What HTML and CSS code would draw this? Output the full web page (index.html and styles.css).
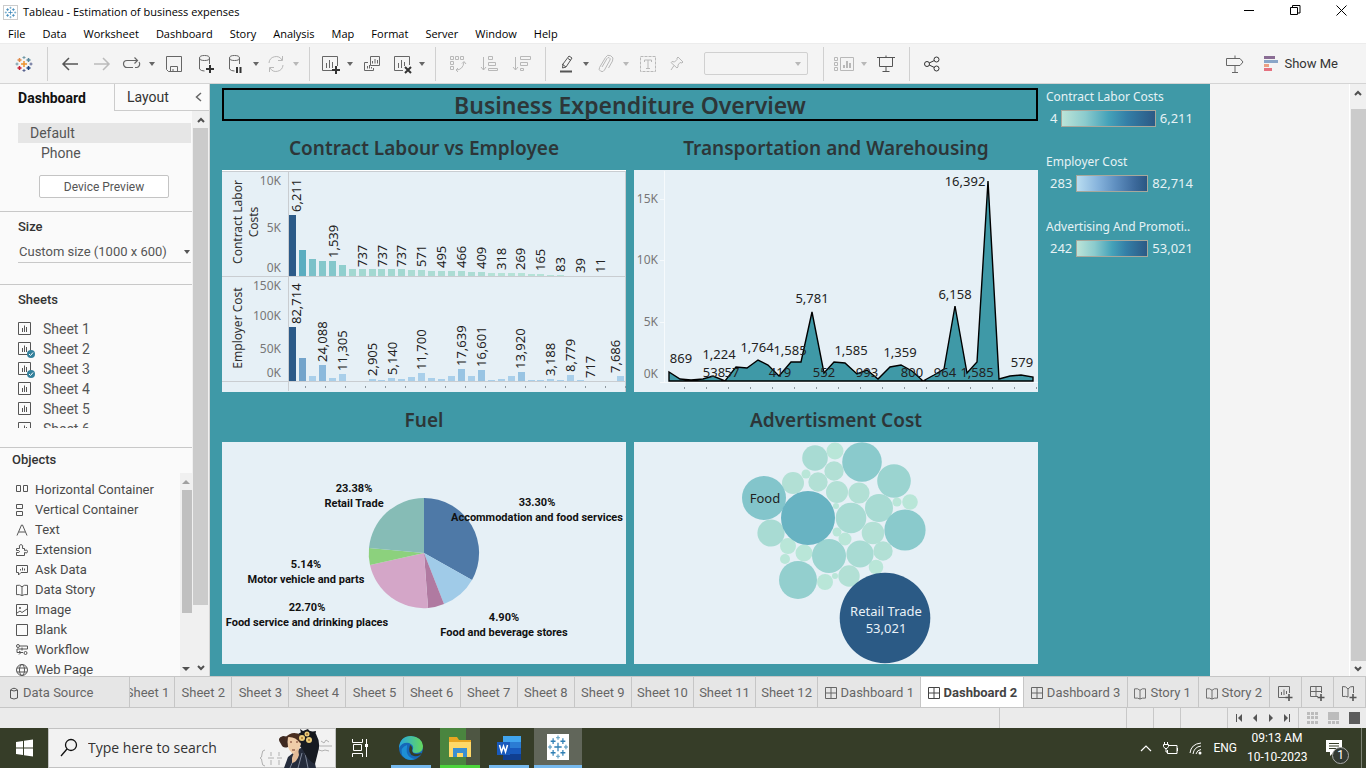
FILE: index.html
```html
<!DOCTYPE html>
<html lang="en">
<head>
<meta charset="utf-8">
<title>Tableau - Estimation of business expenses</title>
<meta name="viewport" content="width=device-width, initial-scale=1">
<link rel="stylesheet" href="styles.css">
</head>
<body>
<svg class="sprite" aria-hidden="true">
  <symbol id="caret" viewBox="0 0 8 6"><path d="M1 1h6L4 5z" fill="currentColor"/></symbol>
  <symbol id="chart" viewBox="0 0 14 14"><path d="M.5.5h12v12H.5zM4.500 6v4M6.500 3.500V10M8.500 5v5" fill="none" stroke="currentColor"/></symbol>
  <symbol id="grid" viewBox="0 0 12 12"><path d="M.5.5h11v11H.5zM.5 6h11M6 .5v11" fill="none" stroke="currentColor"/></symbol>
  <symbol id="book" viewBox="0 0 13 13"><path d="M6.500 3v9.500M.5 1.500Q4 .5 6.500 3 9 .5 12.500 1.500V11.500Q9 11 6.500 12.500 4 11 .5 11.500z" fill="none" stroke="currentColor"/></symbol>
  <symbol id="badge" viewBox="0 0 8 8"><circle cx="4" cy="4" r="4" fill="#33809b"/><path d="M2 4l1.500 1.500L6 2.500" fill="none" stroke="#fff"/></symbol>
  <symbol id="up" viewBox="0 0 8 6"><path d="M1 5l3-3 3 3" fill="none" stroke="#505050" stroke-width="2"/></symbol>
  <symbol id="down" viewBox="0 0 8 6"><path d="M1 1l3 3 3-3" fill="none" stroke="#505050" stroke-width="2"/></symbol>
  <symbol id="database" viewBox="0 0 20 20"><g fill="none" stroke="currentColor"><ellipse cx="8.500" cy="4" rx="5" ry="2.500"/><path d="M3.500 4v11q1.500 2 5 2M13.500 4v6"/></g></symbol>
  <symbol id="tableau" viewBox="0 0 18 18"><g fill="none" stroke-width="1.500"><path d="M9 6v6M6 9h6" stroke="#eb912c"/><path d="M4.500 3v4M2.500 5h4" stroke="#e08a4a"/><path d="M13.500 3v4M11.500 5h4" stroke="#59879b"/><path d="M4.500 11v4M2.500 13h4" stroke="#c72035"/><path d="M13.500 11v4M11.500 13h4" stroke="#1f447e"/><path d="M9 1v3M7.500 2.500h3" stroke="#7199a6" stroke-width="1"/><path d="M9 14v3M7.500 15.500h3" stroke="#5b6591" stroke-width="1"/><path d="M2 7.500v3M.5 9h3" stroke="#7199a6" stroke-width="1"/><path d="M16 7.500v3M14.500 9h3" stroke="#5b6591" stroke-width="1"/></g></symbol>
  <symbol id="tableau-blue" viewBox="0 0 18 18"><rect width="18" height="18" fill="#fff"/><g stroke="#2f7fb4"><path d="M9 6v6M6 9h6M5 3v4M3 5h4M13 3v4M11 5h4M5 11v4M3 13h4M13 11v4M11 13h4"/><path d="M9 1v3M7.500 2.500h3M9 14v3M7.500 15.500h3M2.500 7.500v3M1 9h3M15.500 7.500v3M14 9h3" stroke="#6ba6c8"/></g></symbol>
</svg>

<header class="titlebar">
  <svg class="app-icon" width="15" height="15"><use href="#tableau-blue"/></svg>
  <span>Tableau - Estimation of business expenses</span>
  <div class="window-buttons">
    <button aria-label="Minimize"><svg width="11" height="11" viewBox="0 0 11 11"><path d="M0 5.500h10" stroke="#000"/></svg></button>
    <button aria-label="Restore"><svg width="11" height="11" viewBox="0 0 11 11"><path d="M.5 2.500h7v7h-7zM2.500 2.500v-2h7.500v7.500H8" fill="none" stroke="#000"/></svg></button>
    <button aria-label="Close"><svg width="11" height="11" viewBox="0 0 11 11"><path d="M.5.5l10 10M10.500.5l-10 10" stroke="#000"/></svg></button>
  </div>
</header>

<nav class="menubar" aria-label="Menu">
  <button>File</button><button>Data</button><button>Worksheet</button><button>Dashboard</button><button>Story</button><button>Analysis</button><button>Map</button><button>Format</button><button>Server</button><button>Window</button><button>Help</button>
</nav>

<div class="toolbar" role="toolbar" aria-label="Toolbar">
  <button class="tool home" aria-label="Start page"><svg width="18" height="18"><use href="#tableau"/></svg></button>
  <div class="group">
    <button class="tool" aria-label="Undo"><svg width="20" height="20" viewBox="0 0 20 20"><path d="M18 10H3M9 4l-6 6 6 6" fill="none" stroke="#555" stroke-width="1.500"/></svg></button>
    <button class="tool" aria-label="Redo"><svg width="20" height="20" viewBox="0 0 20 20"><path d="M2 10h15M11 4l6 6-6 6" fill="none" stroke="#bbb" stroke-width="1.500"/></svg></button>
    <button class="tool narrow" aria-label="Replay"><svg width="20" height="20" viewBox="0 0 20 20"><path d="M11 13.500H5a3.500 3.500 0 0 1 0-7H15M12.500 3.500L15.500 6.500l-3 3M17 8a3.500 3.500 0 0 1-2 5.500h-2" fill="none" stroke="#666" stroke-width="1.200"/></svg></button>
    <button class="more" aria-label="Replay options"><svg width="8" height="6"><use href="#caret"/></svg></button>
    <button class="tool" aria-label="Save"><svg width="20" height="20" viewBox="0 0 20 20"><path d="M2.500 2.500h15v15h-13l-2-2zM6.500 17.500v-5h7v5M9 17.500V15" fill="none" stroke="#666"/></svg></button>
    <button class="tool" aria-label="New data source"><svg width="20" height="20" viewBox="0 0 20 20"><use href="#database"/><path d="M14 11v8M10 15h8" stroke="#333" stroke-width="2"/></svg></button>
    <button class="tool narrow" aria-label="Pause updates"><svg width="20" height="20" viewBox="0 0 20 20"><use href="#database"/><path d="M11 13v6M14.500 13v6" stroke="#333" stroke-width="2"/></svg></button>
    <button class="more" aria-label="Update options"><svg width="8" height="6"><use href="#caret"/></svg></button>
    <button class="tool narrow off" aria-label="Run update"><svg width="20" height="20" viewBox="0 0 20 20"><path d="M3 9a7 7 0 0 1 13-3M17 11a7 7 0 0 1-13 3M16.500 2v4.500H12M3.500 18v-4.500H8" fill="none" stroke="currentColor"/></svg></button>
    <button class="more off" aria-label="Run options"><svg width="8" height="6"><use href="#caret"/></svg></button>
  </div>
  <div class="group">
    <button class="tool narrow" aria-label="New worksheet"><svg width="20" height="20" viewBox="0 0 20 20"><path d="M12 16.500H2.500v-14h15V12M6.500 9v5M9.500 6v8M12.500 8v6" fill="none" stroke="#666"/><path d="M16 12v8M12 16h8" stroke="#333" stroke-width="2"/></svg></button>
    <button class="more" aria-label="New options"><svg width="8" height="6"><use href="#caret"/></svg></button>
    <button class="tool" aria-label="Duplicate"><svg width="20" height="20" viewBox="0 0 20 20"><path d="M8.500 2.500h9v9h-9zM6 8.500H2.500v8h9V14M10.500 7v2.500M13 5v4.500M15.500 6v3.500M5.500 12v2.500M7.500 11v3.500M9.500 13v1.500" fill="none" stroke="#666"/></svg></button>
    <button class="tool narrow" aria-label="Clear sheet"><svg width="20" height="20" viewBox="0 0 20 20"><path d="M11 16.500H2.500v-14h15V11M6.500 9v5M9.500 6v8M12.500 8v4" fill="none" stroke="#666"/><path d="M13 13l6 6M19 13l-6 6" stroke="#333" stroke-width="2"/></svg></button>
    <button class="more" aria-label="Clear options"><svg width="8" height="6"><use href="#caret"/></svg></button>
  </div>
  <div class="group">
    <button class="tool off" aria-label="Swap rows and columns"><svg width="20" height="20" viewBox="0 0 20 20"><path d="M2.500 2.500h3v3h-3zM7.500 2.500h3v3h-3zM12.500 2.500h3v3h-3zM2.500 7.500h3v3h-3zM2.500 12.500h3v3h-3zM8 16q7 0 8-8M14 9.500L16 7.500l2 2.500M10 14l-2 2 2 2" fill="none" stroke="currentColor"/></svg></button>
    <button class="tool off" aria-label="Sort ascending"><svg width="20" height="20" viewBox="0 0 20 20"><path d="M3.500 3v13M1 13l2.500 3L6 13M8.500 2.500h4v3h-4zM8.500 8.500h7v3h-7zM8.500 14.500h9v2h-9z" fill="none" stroke="currentColor"/></svg></button>
    <button class="tool off" aria-label="Sort descending"><svg width="20" height="20" viewBox="0 0 20 20"><path d="M3.500 3v13M1 13l2.500 3L6 13M8.500 2.500h10v3h-10zM8.500 8.500h7v3h-7zM8.500 14.500h3v2h-3z" fill="none" stroke="currentColor"/></svg></button>
  </div>
  <div class="group">
    <button class="tool narrow" aria-label="Highlight"><svg width="20" height="20" viewBox="0 0 20 20"><path d="M13 2l3 2-6 9-3.500 1 .5-4zM12 4.500l3 2M6 10l4 3" fill="none" stroke="#555"/><path d="M4 17.500h12" stroke="#555" stroke-width="2"/></svg></button>
    <button class="more" aria-label="Highlight options"><svg width="8" height="6"><use href="#caret"/></svg></button>
    <button class="tool narrow off" aria-label="Group members"><svg width="20" height="20" viewBox="0 0 20 20"><path d="M6 13l5-8.500a1.600 1.600 0 0 1 3 1.500L8.500 16a2.700 2.700 0 0 1-5-2.500l6-10a3.800 3.800 0 0 1 7 3.500l-4 7" fill="none" stroke="currentColor"/></svg></button>
    <button class="more off" aria-label="Group options"><svg width="8" height="6"><use href="#caret"/></svg></button>
    <button class="tool off" aria-label="Show mark labels"><svg width="20" height="20" viewBox="0 0 20 20"><path d="M2.500 2.500h15v15h-15z" fill="none" stroke="currentColor" stroke-dasharray="3 1"/><path d="M6.500 8V6h7v2M10 6v8.500M8 14.500h4" fill="none" stroke="currentColor"/></svg></button>
    <button class="tool narrow off" aria-label="Fix axes"><svg width="20" height="20" viewBox="0 0 20 20"><path d="M10 3l5 5-1 1-2-.5-2 2.500v2l-1 1-6-5.500 1-1 2.500.5L9 5.500 9 4zM6 11.500l-3 4.500" fill="none" stroke="currentColor"/></svg></button>
    <div class="fit off"><select aria-label="Fit" disabled><option></option></select><svg width="8" height="6"><use href="#caret"/></svg></div>
  </div>
  <div class="group">
    <button class="tool narrow off" aria-label="Show cards"><svg width="22" height="20" viewBox="0 0 22 20"><path d="M1.500 3.500h3v3h-3zM1.500 8.500h3v3h-3zM1.500 13.500h3v3h-3zM7.500 3.500h13v13h-13z" fill="none" stroke="currentColor"/><path d="M11 11v3M14 7v7M17 9v5" stroke="currentColor" stroke-width="2"/></svg></button>
    <button class="more off" aria-label="Card options"><svg width="8" height="6"><use href="#caret"/></svg></button>
    <button class="tool" aria-label="Presentation mode"><svg width="20" height="20" viewBox="0 0 20 20"><path d="M1 3.500h18M3.500 3.500v9h13v-9M10 12.500v5M6.500 17.500h7M10 1.500v2" fill="none" stroke="#555"/></svg></button>
  </div>
  <div class="group">
    <button class="tool" aria-label="Share"><svg width="20" height="20" viewBox="0 0 20 20"><g fill="none" stroke="#333"><circle cx="5" cy="10" r="2.500"/><circle cx="14.500" cy="5.500" r="2.500"/><circle cx="14.500" cy="14.500" r="2.500"/><path d="M7.200 9l5-2.400M7.200 11l5 2.400"/></g></svg></button>
  </div>
  <button class="tool guide" aria-label="Guide"><svg width="20" height="20" viewBox="0 0 20 20"><path d="M1.500 4.500H15l3 3.500-3 3.500H1.500zM10 1.500v3M10 11.500v7M7 18.500h6" fill="none" stroke="#666"/></svg></button>
  <button class="show-me"><svg width="14" height="16" viewBox="0 0 14 16"><path d="M0 0h11v3H0z" fill="#8a6d94"/><path d="M0 4h14v3H0z" fill="#8aa6c8"/><path d="M0 8h5v3H0z" fill="#eba083"/><path d="M0 12h8v3H0z" fill="#e57280"/></svg>Show Me</button>
</div>

<main class="main">
  <aside class="sidebar">
    <div class="side-tabs">
      <button class="side-tab current">Dashboard</button>
      <div class="side-tab-rest"><button class="side-tab">Layout</button><button class="collapse" aria-label="Collapse pane"><svg width="7" height="10" viewBox="0 0 7 10"><path d="M6 1L1.500 5 6 9" fill="none" stroke="#666" stroke-width="1.500"/></svg></button></div>
    </div>
    <div class="side-body">
      <div class="side-content">
        <section class="pane devices">
          <ul><li class="selected">Default</li><li class="child">Phone</li></ul>
          <button class="preview">Device Preview</button>
        </section>
        <section class="pane size">
          <h3><label for="size">Size</label></h3>
          <div class="size-field"><select id="size"><option>Custom size (1000 x 600)</option></select><svg width="8" height="6"><use href="#caret"/></svg></div>
        </section>
        <section class="pane sheets">
          <h3>Sheets</h3>
          <ul>
            <li><span class="sheet-icon"><svg width="14" height="14"><use href="#chart"/></svg></span>Sheet 1</li>
            <li><span class="sheet-icon"><svg width="14" height="14"><use href="#chart"/></svg><svg class="used" width="8" height="8"><use href="#badge"/></svg></span>Sheet 2</li>
            <li><span class="sheet-icon"><svg width="14" height="14"><use href="#chart"/></svg><svg class="used" width="8" height="8"><use href="#badge"/></svg></span>Sheet 3</li>
            <li><span class="sheet-icon"><svg width="14" height="14"><use href="#chart"/></svg></span>Sheet 4</li>
            <li><span class="sheet-icon"><svg width="14" height="14"><use href="#chart"/></svg></span>Sheet 5</li>
            <li><span class="sheet-icon"><svg width="14" height="14"><use href="#chart"/></svg></span>Sheet 6</li>
          </ul>
        </section>
        <section class="pane objects">
          <h3>Objects</h3>
          <div class="object-area">
            <ul>
              <li><svg width="12" height="12" viewBox="0 0 12 12"><path d="M.5 1.500h4v6h-4zM7.500 1.500h4v6h-4z" fill="none" stroke="#555"/></svg>Horizontal Container</li>
              <li><svg width="12" height="12" viewBox="0 0 12 12"><path d="M.5.5h6v4h-6zM.5 7.500h6v4h-6z" fill="none" stroke="#555"/></svg>Vertical Container</li>
              <li><svg width="12" height="12" viewBox="0 0 12 12"><path d="M1 11.500L5.500 1h1L11 11.500M3 8h6" fill="none" stroke="#555"/></svg>Text</li>
              <li><svg width="12" height="12" viewBox="0 0 12 12"><path d="M.5 4.500h3q-1-4 1.500-4t1.500 4h2v2q3-1.500 3 1t-3 1v3H.5v-3q3 .5 3-1t-3-1z" fill="none" stroke="#555"/></svg>Extension</li>
              <li><svg width="12" height="12" viewBox="0 0 12 12"><path d="M.5 1.500h11v7H5L2.500 11V8.500h-2zM4.500 5v1.500M6.500 3.500v3M8.500 4.500v2" fill="none" stroke="#555"/></svg>Ask Data</li>
              <li><svg width="12" height="12"><use href="#book"/></svg>Data Story</li>
              <li><svg width="12" height="12" viewBox="0 0 12 12"><path d="M.5.5h11v11H.5zM1 9l3-2 2 1.500L11 5" fill="none" stroke="#555"/><circle cx="4" cy="4" r="1" fill="#555"/></svg>Image</li>
              <li><svg width="12" height="12" viewBox="0 0 12 12"><path d="M.5.5h11v11H.5z" fill="none" stroke="#555"/></svg>Blank</li>
              <li><svg width="12" height="12" viewBox="0 0 12 12"><g fill="none" stroke="#555"><circle cx="2" cy="2" r="1.500"/><circle cx="9.500" cy="9" r="1.500"/><path d="M4 2h7.500v3H1v3.500h6M6 3.500v3M3 7l2 1.500L3 10.500"/></g></svg>Workflow</li>
              <li><svg width="12" height="12" viewBox="0 0 12 12"><g fill="none" stroke="#555"><circle cx="6" cy="6" r="5.500"/><ellipse cx="6" cy="6" rx="2.500" ry="5.500"/><path d="M1 4h10M1 8h10"/></g></svg>Web Page</li>
            </ul>
            <div class="mini-scroll"><svg width="8" height="6" viewBox="0 0 8 6"><path d="M0 5h8L4 1z" fill="#a0a0a0"/></svg><span class="mini-thumb"></span><svg width="8" height="6" viewBox="0 0 8 6"><path d="M0 1h8L4 5z" fill="#505050"/></svg></div>
          </div>
        </section>
      </div>
      <div class="scroll"><svg width="8" height="6"><use href="#up"/></svg><span class="thumb side-thumb"></span><svg width="8" height="6"><use href="#down"/></svg></div>
    </div>
  </aside>

  <div class="workspace">
    <div class="dashboard">
      <div class="views">
        <h1>Business Expenditure Overview</h1>
        <div class="zones">
          <section>
            <h2>Contract Labour vs Employee</h2>
            <svg class="view" viewBox="0 0 404 222" role="img" aria-label="Contract labor costs and employer cost bars">
              <path d="M0 0h404v1H0z" fill="#fff"/>
              <path d="M0 1.500h404M0 106.500h404M0 211.500h404M66.500 1v220M403.500 1v221" stroke="#c9cdd1" fill="none"/>
              <g class="axis">
                <text x="59" y="15">10K</text><text x="59" y="62">5K</text><text x="59" y="102">0K</text>
                <text x="59" y="120">150K</text><text x="59" y="150">100K</text><text x="59" y="183">50K</text><text x="59" y="207">0K</text>
              </g>
              <g class="axis-title">
                <text transform="translate(20 52) rotate(-90)">Contract Labor</text>
                <text transform="translate(36 52) rotate(-90)">Costs</text>
                <text transform="translate(20 158) rotate(-90)">Employer Cost</text>
              </g>
              <g fill="#2b5a88"><path d="M67 45h7v61h-7zM67 157h7v54h-7z"/></g>
              <path d="M77 80h7v26h-7z" fill="#5badc0"/>
              <path d="M87 89h7v17h-7z" fill="#7bc1c9"/>
              <path d="M97 91h7v15h-7zM107 91h7v15h-7z" fill="#84c7cb"/>
              <path d="M117 95h7v11h-7z" fill="#90cfce"/>
              <path d="M127 99h7v7h-7zM137 99h7v7h-7zM147 99h7v7h-7zM156 99h7v7h-7zM166 99h7v7h-7zM176 99h7v7h-7z" fill="#a3d8d1"/>
              <path d="M186 100h7v6h-7zM196 100h7v6h-7zM206 101h7v5h-7zM216 101h7v5h-7zM226 101h7v5h-7zM236 101h7v5h-7zM246 102h7v4h-7zM256 102h7v4h-7z" fill="#acdcd4"/>
              <path d="M266 103h7v3h-7zM276 103h7v3h-7zM286 103h7v3h-7zM296 103h7v3h-7zM306 104h7v2h-7zM315 104h7v2h-7zM325 105h7v1h-7zM335 105h7v1h-7z" fill="#b5e2d7"/>
              <path d="M77 188h7v23h-7z" fill="#73a4cb"/>
              <path d="M97 195h7v16h-7z" fill="#8bb9dc"/>
              <path d="M236 199h7v12h-7zM256 200h7v11h-7zM296 202h7v9h-7z" fill="#98c4e3"/>
              <path d="M87 206h7v5h-7zM107 208h7v3h-7zM117 204h7v7h-7zM147 209h7v2h-7zM156 210h7v1h-7zM166 208h7v3h-7zM176 209h7v2h-7zM186 207h7v4h-7zM196 203h7v8h-7zM206 208h7v3h-7zM216 209h7v2h-7zM226 206h7v5h-7zM246 206h7v5h-7zM266 210h7v1h-7zM276 209h7v2h-7zM286 206h7v5h-7zM306 210h7v1h-7zM315 210h7v1h-7zM325 209h7v2h-7zM335 210h7v1h-7zM345 205h7v6h-7zM355 210h7v1h-7zM395 206h7v5h-7z" fill="#a9cfea"/>
              <g class="mark-label">
                <text transform="translate(79 42) rotate(-90)">6,211</text>
                <text transform="translate(116 88) rotate(-90)">1,539</text>
                <text transform="translate(145 97) rotate(-90)">737</text>
                <text transform="translate(165 97) rotate(-90)">737</text>
                <text transform="translate(184 97) rotate(-90)">737</text>
                <text transform="translate(204 97) rotate(-90)">571</text>
                <text transform="translate(224 98) rotate(-90)">495</text>
                <text transform="translate(244 98) rotate(-90)">466</text>
                <text transform="translate(264 99) rotate(-90)">409</text>
                <text transform="translate(284 100) rotate(-90)">318</text>
                <text transform="translate(303 100) rotate(-90)">269</text>
                <text transform="translate(323 101) rotate(-90)">165</text>
                <text transform="translate(343 102) rotate(-90)">83</text>
                <text transform="translate(363 103) rotate(-90)">39</text>
                <text transform="translate(383 103) rotate(-90)">11</text>
                <text transform="translate(79 154) rotate(-90)">82,714</text>
                <text transform="translate(105 192) rotate(-90)">24,088</text>
                <text transform="translate(125 201) rotate(-90)">11,305</text>
                <text transform="translate(155 206) rotate(-90)">2,905</text>
                <text transform="translate(175 205) rotate(-90)">5,140</text>
                <text transform="translate(204 200) rotate(-90)">11,700</text>
                <text transform="translate(244 196) rotate(-90)">17,639</text>
                <text transform="translate(264 197) rotate(-90)">16,601</text>
                <text transform="translate(303 199) rotate(-90)">13,920</text>
                <text transform="translate(333 206) rotate(-90)">3,188</text>
                <text transform="translate(353 202) rotate(-90)">8,779</text>
                <text transform="translate(373 208) rotate(-90)">717</text>
                <text transform="translate(398 203) rotate(-90)">7,686</text>
              </g>
              <path d="M83 217h321" stroke="#8d979e" stroke-width="2" stroke-dasharray="1 19" fill="none"/>
            </svg>
          </section>
          <section>
            <h2>Transportation and Warehousing</h2>
            <svg class="view" viewBox="0 0 404 222" role="img" aria-label="Transportation and warehousing area">
              <path d="M30.500 1v212M26 29.500h4M26 90.500h4M26 152.500h4M26 212.500h378" stroke="#f6fafc" fill="none"/>
              <g class="axis"><text x="24" y="33">15K</text><text x="24" y="94">10K</text><text x="24" y="156">5K</text><text x="24" y="208">0K</text></g>
              <path d="M35 211V202L46 209 57 210 69 209 79 206 91 211 102 197 113 198 124 190 134 195 145 206 157 192 167 192 178 142 190 203 200 192 211 193 223 204 233 200 244 209 256 197 267 195 278 201 289 211 300 205 310 199 321 136 333 203 343 192 354 11 365 209 376 206 387 205 399 207V211z" fill="#3f99a7" stroke="#000" stroke-width="1.400"/>
              <g class="mark-label centered">
                <text x="47" y="193">869</text><text x="85" y="189">1,224</text><text x="80" y="207">538</text><text x="98" y="207">57</text>
                <text x="123" y="182">1,764</text><text x="156" y="185">1,585</text><text x="146" y="207">419</text><text x="178" y="133">5,781</text>
                <text x="190" y="207">552</text><text x="217" y="185">1,585</text><text x="233" y="207">993</text><text x="266" y="187">1,359</text>
                <text x="278" y="207">800</text><text x="311" y="207">964</text><text x="343" y="207">1,585</text><text x="321" y="129">6,158</text>
                <text x="331" y="16">16,392</text><text x="388" y="197">579</text>
              </g>
              <path d="M50 218h354" stroke="#8d979e" stroke-width="2" stroke-dasharray="1 21" fill="none"/>
            </svg>
          </section>
          <section>
            <h2>Fuel</h2>
            <svg class="view" viewBox="0 0 404 222" role="img" aria-label="Fuel share by sector">
              <path d="M202 111V56A55 55 0 0 1 250 138z" fill="#4e79a7"/>
              <path d="M202 111L250 138A55 55 0 0 1 222 162z" fill="#a0cbe8"/>
              <path d="M202 111L222 162A55 55 0 0 1 206 166z" fill="#b07aa1"/>
              <path d="M202 111L206 166A55 55 0 0 1 148 123z" fill="#d4a6c8"/>
              <path d="M202 111L148 123A55 55 0 0 1 147 106z" fill="#8cd17d"/>
              <path d="M202 111L147 106A55 55 0 0 1 202 56z" fill="#86bcb6"/>
              <g class="slice-label">
                <text x="132" y="50">23.38%</text><text x="132" y="65">Retail Trade</text>
                <text x="315" y="64">33.30%</text><text x="315" y="79">Accommodation and food services</text>
                <text x="84" y="126">5.14%</text><text x="84" y="141">Motor vehicle and parts</text>
                <text x="85" y="169">22.70%</text><text x="85" y="184">Food service and drinking places</text>
                <text x="282" y="179">4.90%</text><text x="282" y="194">Food and beverage stores</text>
              </g>
            </svg>
          </section>
          <section>
            <h2>Advertisment Cost</h2>
            <svg class="view" viewBox="0 0 404 222" role="img" aria-label="Advertisement cost bubbles">
              <g fill="#b9e6d8"><circle cx="201" cy="9" r="8.500"/><circle cx="172" cy="32" r="4.500"/><circle cx="202" cy="64" r="3"/><circle cx="263" cy="60" r="4.500"/><circle cx="276" cy="60" r="7.800"/><circle cx="203" cy="90" r="4.500"/><circle cx="211" cy="97" r="6.500"/><circle cx="154" cy="104" r="8"/><circle cx="170" cy="111" r="8.500"/><circle cx="151" cy="117" r="5"/><circle cx="191" cy="140" r="8"/><circle cx="201" cy="134" r="3"/><circle cx="242" cy="125" r="7.300"/></g>
              <g fill="#b2e0d5"><circle cx="200" cy="29" r="9.700"/><circle cx="159" cy="41" r="11"/><circle cx="184" cy="40" r="9.700"/><circle cx="203" cy="50" r="11"/><circle cx="225" cy="51" r="10.600"/><circle cx="239" cy="91" r="11.300"/><circle cx="249" cy="109" r="9.700"/><circle cx="215" cy="134" r="10.700"/></g>
              <g fill="#a8dbd3"><circle cx="181" cy="16" r="12.800"/><circle cx="217" cy="76" r="15.300"/><circle cx="245" cy="66" r="14"/><circle cx="137" cy="91" r="13.600"/><circle cx="226" cy="112" r="13.600"/></g>
              <g fill="#9bd4d0"><circle cx="260" cy="39" r="16.800"/><circle cx="195" cy="114" r="17"/></g>
              <circle cx="164" cy="138" r="19" fill="#93cfce"/>
              <g fill="#8acacc"><circle cx="228" cy="20" r="19.800"/><circle cx="271" cy="88" r="20.600"/></g>
              <circle cx="130" cy="56" r="22" fill="#83c5cb"/>
              <circle cx="174" cy="76" r="27" fill="#68b3c2"/>
              <circle cx="251" cy="176" r="45.300" fill="#2b5a85"/>
              <g class="mark-label centered"><text x="131" y="61">Food</text><text class="on-dark" x="252" y="174">Retail Trade</text><text class="on-dark" x="252" y="191">53,021</text></g>
            </svg>
          </section>
        </div>
      </div>
      <div class="legends">
        <div class="legend"><h4>Contract Labor Costs</h4><div class="scale"><span>4</span><i class="ramp teal"></i><span>6,211</span></div></div>
        <div class="legend"><h4>Employer Cost</h4><div class="scale"><span>283</span><i class="ramp blue"></i><span>82,714</span></div></div>
        <div class="legend"><h4>Advertising And Promoti..</h4><div class="scale"><span>242</span><i class="ramp teal"></i><span>53,021</span></div></div>
      </div>
    </div>
  </div>
  <div class="scroll page-scroll"><svg width="8" height="6"><use href="#up"/></svg><span class="thumb"></span><svg width="8" height="6"><use href="#down"/></svg></div>
</main>

<nav class="sheet-tabs" aria-label="Sheets">
  <button class="source"><svg width="10" height="13" viewBox="0 0 10 13"><path d="M1.500 3v8q3.500 2 7 0V3q-3.500-3.500-7 0 3.500 2 7 0" fill="none" stroke="#555"/></svg>Data Source</button>
  <button class="clipped"><span>Sheet 1</span></button><button>Sheet 2</button><button>Sheet 3</button><button>Sheet 4</button><button>Sheet 5</button><button>Sheet 6</button><button>Sheet 7</button><button>Sheet 8</button><button>Sheet 9</button><button class="long">Sheet 10</button><button class="long">Sheet 11</button><button class="long">Sheet 12</button>
  <button class="wide"><svg width="12" height="12"><use href="#grid"/></svg>Dashboard 1</button>
  <button class="wide active"><svg width="12" height="12"><use href="#grid"/></svg>Dashboard 2</button>
  <button class="wide"><svg width="12" height="12"><use href="#grid"/></svg>Dashboard 3</button>
  <button class="story"><svg width="12" height="13"><use href="#book"/></svg>Story 1</button>
  <button class="story"><svg width="12" height="13"><use href="#book"/></svg>Story 2</button>
  <button class="add" aria-label="New Worksheet"><svg width="16" height="16" viewBox="0 0 16 16"><path d="M9 12.500H1.500v-11h11V8M4.500 7v3M7 4.500V10M9.500 6v3" fill="none" stroke="#666"/><path d="M12 9v7M8.500 12.500h7" stroke="#555" stroke-width="1.600"/></svg></button>
  <button class="add" aria-label="New Dashboard"><svg width="16" height="16" viewBox="0 0 16 16"><path d="M9 11.500H1.500v-10h11V8M1.500 6.500h11M7 1.500v10" fill="none" stroke="#666"/><path d="M12 9v7M8.500 12.500h7" stroke="#555" stroke-width="1.600"/></svg></button>
  <button class="add" aria-label="New Story"><svg width="16" height="16" viewBox="0 0 16 16"><path d="M7 4v8Q5 11 1.500 11.500v-10Q5 1 7 4 9 1 12.500 1.500V8" fill="none" stroke="#666"/><path d="M12 9v7M8.500 12.500h7" stroke="#555" stroke-width="1.600"/></svg></button>
</nav>

<footer class="status">
  <span class="cell c1"></span><span class="cell c2"></span><span class="cell c2"></span><span class="cell c3"></span>
  <div class="cell pager">
    <button aria-label="First"><svg width="8" height="8" viewBox="0 0 8 8"><path d="M1 0h1v8H1zM7 0v8L3 4z" fill="#555"/></svg></button>
    <button aria-label="Previous"><svg width="8" height="8" viewBox="0 0 8 8"><path d="M6 0v8L2 4z" fill="#555"/></svg></button>
    <button aria-label="Next"><svg width="8" height="8" viewBox="0 0 8 8"><path d="M2 0v8l4-4z" fill="#555"/></svg></button>
    <button aria-label="Last"><svg width="8" height="8" viewBox="0 0 8 8"><path d="M6 0h1v8H6zM1 0v8l4-4z" fill="#555"/></svg></button>
  </div>
  <div class="cell modes">
    <button aria-label="Sheet sorter"><svg width="11" height="12" viewBox="0 0 11 12"><path d="M0 0h3v3H0zM4 0h3v3H4zM8 0h3v3H8zM0 4h3v3H0zM4 4h3v3H4zM8 4h3v3H8zM0 9h3v3H0zM4 9h3v3H4zM8 9h3v3H8z" fill="#bcbcbc"/></svg></button>
    <button aria-label="Filmstrip"><svg width="11" height="12" viewBox="0 0 11 12"><path d="M0 0h11v8H0zM0 9h3v3H0zM4 9h3v3H4zM8 9h3v3H8z" fill="#bcbcbc"/></svg></button>
    <button aria-label="Tabs"><svg width="11" height="12" viewBox="0 0 11 12"><path d="M0 0h11v12H0z" fill="#5c5c5c"/></svg></button>
  </div>
</footer>

<div class="taskbar">
  <button class="start" aria-label="Start"><svg width="17" height="18" viewBox="0 0 17 18"><path d="M0 3l7-1v6.500H0zM8 1.800L17 .5v8H8zM0 9.500h7V16l-7-1zM8 9.500h9v8l-9-1.300z" fill="#fff"/></svg></button>
  <label class="search">
    <svg width="18" height="20" viewBox="0 0 18 20"><circle cx="11" cy="7" r="5.500" fill="none" stroke="#111" stroke-width="1.300"/><path d="M7 11L1 18" stroke="#111" stroke-width="1.300"/></svg>
    <input type="text" placeholder="Type here to search" aria-label="Search">
    <svg class="doodle" width="76" height="39" viewBox="0 0 76 39" aria-hidden="true">
      <g fill="none" stroke="#b0b0b0"><path d="M6 21q-3 0-3 4t-2 4q2 0 2 4t3 4M9 29h6M18 29h5M12 23v4M12 31v5M20 23v4M20 31v5M60 17h13M62 12l3 2 2-3 3 2M60 21l3 1 3-1 4 1"/></g>
      <path d="M22 15q-5-6 2-8l7 1-2 10q-5 2-7-3z" fill="#3e2921"/>
      <path d="M25 39l4-11 10-8 13-4 5 23z" fill="#252c3c"/>
      <path d="M31 39l6-14M39 39l4-15M49 39l-3-15" stroke="#7d8698"/>
      <path d="M39 5q10-7 18 0 5 9 2 18l-3 12q-8-4-12-14l-8-10z" fill="#171b22"/>
      <path d="M41 0l3 2 5-2 2 3 6-1-1 6-12 3z" fill="#14171c"/>
      <path d="M29 8q4-4 9 0l4 7-3 8-3 3-3-2q-6-5-4-16z" fill="#f0cda9"/>
      <path d="M26 9q7-8 16-3l-1 8q-4-6-11-6-4 1-4 6z" fill="#4a2e20"/>
      <path d="M31 13h2M37 13h2M33 21h3" stroke="#713629"/>
      <path d="M33 29q2-7 6-9l1 6q-2 7-7 8z" fill="#e2bb98"/>
      <g fill="#ebcc79"><circle cx="43" cy="9" r="3"/><circle cx="48" cy="5" r="2.500"/><circle cx="50" cy="11" r="3"/></g>
      <g fill="#ab7532"><circle cx="43" cy="9" r="1"/><circle cx="48" cy="5" r="1"/><circle cx="50" cy="11" r="1"/></g>
    </svg>
  </label>
  <button class="app task-view" aria-label="Task View"><svg width="17" height="18" viewBox="0 0 17 18"><path d="M.5 0v3.500h10V0M.5 18v-3.500h10V18M1.500 5.500h8v6h-8zM14.500 0v18" fill="none" stroke="#fff"/><path d="M13 5h3v3h-3z" fill="#fff"/></svg></button>
  <button class="app running" aria-label="Microsoft Edge"><svg width="26" height="28" viewBox="0 0 26 28"><defs><linearGradient id="eg" x1="0" y1="0" x2="1" y2="0"><stop offset="0" stop-color="#26a8e0"/><stop offset="1" stop-color="#66d85b"/></linearGradient></defs><circle cx="13" cy="14" r="12" fill="#1668b8"/><path d="M1 14Q2 2 13 2q11 1 12 10 0 7-7 7-5 0-3-4 1-4-4-6Q4 8 1 14z" fill="url(#eg)"/><path d="M9 13q-2 10 8 12-8 3-13-4-2-8 5-10z" fill="#1d8fd5"/><path d="M12 11q3 2 2 5 0 4 5 4l5-1q-3 4-8 3-7-2-4-11z" fill="#353c27"/></svg></button>
  <button class="app running progress" aria-label="File Explorer"><svg width="24" height="24" viewBox="0 0 24 24"><path d="M1 2h8l2 3h12v17H1z" fill="#e9a621"/><path d="M1 7h22v15H1z" fill="#ffd868"/><path d="M5 22v-9h14v9h-4v-4H9v4z" fill="#3b8fd2"/></svg></button>
  <button class="app running" aria-label="Word"><svg width="26" height="26" viewBox="0 0 26 26"><path d="M7 1h18v24H7z" fill="#185abd"/><path d="M7 1h18v6H7z" fill="#41a5ee"/><path d="M7 7h18v6H7z" fill="#2b7cd3"/><path d="M7 19h18v6H7z" fill="#103f91"/><path d="M1 7h13v13H1z" fill="#185abd"/><path d="M3.500 10l2 7 2-6 2 6 2-7" fill="none" stroke="#fff" stroke-width="1.500"/></svg></button>
  <button class="app running focused" aria-label="Tableau"><svg width="22" height="26" viewBox="0 0 18 18" preserveAspectRatio="none"><use href="#tableau-blue"/></svg></button>
  <div class="tray">
    <svg width="12" height="8" viewBox="0 0 12 8"><path d="M1 7l5-5 5 5" fill="none" stroke="#fff" stroke-width="1.200"/></svg>
    <svg width="17" height="14" viewBox="0 0 17 14"><path d="M6 4.500h9v8H5.500V9M15.500 7v3M2.500 1v3M5.500 1v3M1.500 3.500h5v2l-1.500 2h-2l-1.500-2zM4 8v3h2" fill="none" stroke="#fff"/></svg>
    <svg width="14" height="14" viewBox="0 0 14 14"><path d="M1 12Q2 3 12 2M4 13Q5 6 12 5M7 13Q8 9 12 8.500" fill="none" stroke="#fff"/><circle cx="11" cy="12" r="1.500" fill="#fff"/></svg>
    <span>ENG</span>
    <div class="clock"><time>09:13 AM</time><time>10-10-2023</time></div>
    <button class="notice" aria-label="Notifications"><svg width="17" height="17" viewBox="0 0 17 17"><path d="M0 0h16v12H8l-4 4v-4H0z" fill="#fff"/><path d="M3 3.500h10M3 6h10M3 8.500h7" stroke="#353c27"/></svg><span class="count">1</span></button>
  </div>
</div>
</body>
</html>
```
FILE: styles.css
```css
* { box-sizing: border-box; }

body {
  margin: 0;
  height: 100vh;
  display: flex;
  flex-direction: column;
  overflow: hidden;
  background: #fff;
  color: #555;
  font: 13px/20px Roboto, sans-serif;
}

button {
  margin: 0;
  padding: 0;
  border: 0;
  background: none;
  color: inherit;
  font: inherit;
}

h1, h2, h3, h4, ul { margin: 0; padding: 0; }
ul { list-style: none; }
svg { display: block; flex: none; }
.sprite { position: absolute; width: 0; height: 0; }

/* Window chrome */
.titlebar {
  flex: none;
  display: flex;
  align-items: center;
  gap: 5px;
  height: 24px;
  padding-left: 3px;
  color: #000;
  font: 11px/20px "Open Sans", sans-serif;
}
.window-buttons { display: flex; margin: 0 2px 4px auto; height: 20px; }
.window-buttons button { width: 46px; display: flex; align-items: center; justify-content: center; }
.app-icon { border: 1px solid #ccc; }

.menubar {
  flex: none;
  display: flex;
  gap: 17px;
  height: 19px;
  padding-left: 8px;
  color: #000;
  font: 11px/20px "Open Sans", sans-serif;
}

.toolbar {
  flex: none;
  display: flex;
  align-items: center;
  height: 41px;
  background: #f4f4f4;
  border-top: 1px solid #ececec;
  border-bottom: 1px solid #d4d4d4;
  color: #666;
}
.group {
  display: flex;
  align-items: center;
  height: 34px;
  padding: 0 7px 0 6px;
  border-left: 1px solid #d0d0d0;
}
.tool { display: flex; align-items: center; justify-content: center; width: 32px; height: 28px; }
.home { width: 47px; }
.narrow { width: 28px; }
.more { display: flex; align-items: center; justify-content: center; width: 12px; height: 28px; }
.off { color: #b8b8b8; }
.fit {
  display: flex;
  align-items: center;
  width: 104px;
  height: 23px;
  margin: 0 8px 0 12px;
  padding-right: 5px;
  border: 1px solid #d0d0d0;
  border-radius: 2px;
}
.fit select { flex: 1; min-width: 0; border: 0; background: none; appearance: none; }
.guide { margin-left: auto; }
.show-me {
  display: flex;
  align-items: center;
  gap: 6px;
  margin: 0 28px 0 13px;
  color: #333;
  font-size: 13px;
}

/* Main area */
.main { flex: 1; display: flex; min-height: 0; }

.sidebar {
  flex: none;
  display: flex;
  flex-direction: column;
  width: 210px;
  background: #fafafa;
  border-right: 1px solid #d4d4d4;
}
.side-tabs { flex: none; display: flex; height: 27px; font-size: 14px; color: #333; }
.side-tab.current { flex: none; width: 114px; padding-right: 10px; color: #111; font-weight: 700; }
.side-tab-rest {
  flex: 1;
  display: flex;
  justify-content: space-between;
  padding: 0 7px 0 12px;
  border-left: 1px solid #ccc;
  border-bottom: 1px solid #ccc;
}
.side-body { flex: 1; display: flex; min-height: 0; }
.side-content { flex: 1; display: flex; flex-direction: column; min-height: 0; }

.pane { flex: none; border-bottom: 1px solid #c8c8c8; }
.pane h3 { color: #333; font-size: 13px; font-weight: 500; line-height: 18px; }
.devices { padding: 12px 1px 13px 18px; font-size: 14px; }
.devices li { padding-left: 12px; }
.devices li.child { padding-left: 23px; }
.devices li.selected { background: #e6e6e6; }
.preview {
  display: block;
  width: 130px;
  height: 23px;
  margin: 12px 0 0 21px;
  border: 1px solid #c4c4c4;
  border-radius: 2px;
  background: #fff;
  font-size: 12px;
}
.size { padding: 6px 1px 21px 18px; }
.size-field { display: flex; align-items: center; height: 22px; margin-top: 5px; border-bottom: 1px solid #c8c8c8; color: #555; }
.size-field select { flex: 1; min-width: 0; padding: 0 1px; border: 0; background: none; color: inherit; font: inherit; appearance: none; }
.sheets { padding: 6px 1px 19px 18px; }
.sheets ul { height: 109px; margin-top: 10px; overflow: hidden; font-size: 14px; }
.sheets li, .object-area li { display: flex; align-items: center; height: 20px; }
.sheets li { gap: 10px; }
.sheet-icon { position: relative; width: 15px; }
.used { position: absolute; right: -2px; bottom: -2px; }
.pane.objects { flex: 1; display: flex; flex-direction: column; min-height: 0; padding: 3px 0 0 12px; border-bottom: 0; }
.object-area { flex: 1; display: flex; min-height: 0; margin-top: 4px; overflow: hidden; }
.object-area ul { flex: 1; padding: 7px 0 0 4px; }
.object-area li { gap: 7px; color: #4a4a4a; }
.mini-scroll { display: flex; flex-direction: column; align-items: center; width: 12px; padding: 6px 0 4px; background: #f0f0f0; }
.mini-thumb { width: 10px; height: 123px; margin: 5px 0 auto 2px; background: #c0c0c0; }

.scroll {
  flex: none;
  display: flex;
  flex-direction: column;
  align-items: center;
  width: 17px;
  padding: 6px 0 5px;
  background: #f0f0f0;
}
.thumb { flex: 1; width: 15px; margin: 5px 0; background: #cbcbcb; }
.side-thumb { margin-bottom: 60px; }
.page-scroll { border-left: 1px solid #fff; padding-bottom: 4px; }
.page-scroll .thumb { margin-top: 13px; }

.workspace { flex: 1; min-width: 0; overflow: hidden; background: #f4f4f4; }

/* Dashboard */
.dashboard {
  display: flex;
  gap: 8px;
  max-width: 1000px;
  height: 100%;
  padding: 4px 12px;
  background: #3f99a7;
  font-family: "Noto Sans", sans-serif;
}
.views { flex: 1; min-width: 0; }
.dashboard h1 {
  height: 33px;
  border: 2px solid #000;
  color: #2d3638;
  font-size: 23px;
  font-weight: 600;
  line-height: 30px;
  text-align: center;
}
.zones { display: grid; grid-template-columns: 1fr 1fr; gap: 1px 8px; }
.zones h2 {
  padding-top: 5px;
  color: #2d3638;
  font-size: 19px;
  font-weight: 600;
  line-height: 44px;
  text-align: center;
}
.view { width: 100%; background: #e6f0f6; overflow: hidden; }
.axis { fill: #777; font-size: 12px; text-anchor: end; }
.axis-title { fill: #333; font-size: 12px; text-anchor: middle; }
.mark-label { fill: #222; font-size: 13px; }
.centered { text-anchor: middle; }
.mark-label .on-dark { fill: #e9f1f7; }
.slice-label { fill: #111; font-family: Roboto, sans-serif; font-size: 11px; font-weight: 700; text-anchor: middle; }

.legends { width: 152px; color: #e6f2f5; }
.legend { height: 65px; }
.legend h4 { font-size: 12px; font-weight: 400; line-height: 18px; white-space: nowrap; }
.scale { display: flex; align-items: center; gap: 4px; height: 17px; margin-top: 4px; padding: 0 5px 0 4px; font-size: 13px; line-height: 17px; }
.ramp { flex: 1; height: 17px; border: 1px solid #a7a89c; }
.teal { background: linear-gradient(90deg, #bce4d8, #8bcbcd 25%, #45a2b9 50%, #347fa7 70%, #2c5985); }
.blue { background: linear-gradient(90deg, #b9ddf1, #86b3dc 30%, #5f8fc0 55%, #3d6a9c 82%, #2a5783); }

/* Sheet tabs */
.sheet-tabs {
  flex: none;
  display: flex;
  height: 32px;
  border-top: 1px solid #c6c6c6;
  border-bottom: 1px solid #c6c6c6;
  background: #e6e6e6;
  color: #666;
  white-space: nowrap;
}
.sheet-tabs button {
  flex: 56 1 0;
  display: flex;
  align-items: center;
  justify-content: center;
  gap: 4px;
  min-width: 0;
  padding-top: 2px;
  overflow: hidden;
  border-right: 1px solid #c6c6c6;
}
.sheet-tabs .source { flex-grow: 120; justify-content: flex-start; padding-left: 9px; }
.sheet-tabs .clipped { flex-grow: 39; justify-content: flex-end; padding-right: 5px; }
.sheet-tabs .long { flex-grow: 61; }
.sheet-tabs .wide { flex-grow: 102; }
.sheet-tabs .story { flex-grow: 70; }
.sheet-tabs .add { flex-grow: 31; }
.sheet-tabs .active { background: #fff; color: #444; font-weight: 700; }

.status { flex: none; display: flex; justify-content: flex-end; height: 20px; background: #ebebeb; }
.cell { display: flex; align-items: center; border-left: 1px solid #c8c8c8; }
.c1 { width: 127px; }
.c2 { width: 27px; }
.c3 { width: 47px; }
.pager { gap: 8px; width: 71px; padding-left: 7px; }
.modes { gap: 10px; width: 68px; padding-left: 8px; }

/* Taskbar */
.taskbar { flex: none; display: flex; height: 40px; background: #363d28; color: #fff; font-size: 12px; line-height: 19px; }
.start { display: flex; align-items: center; justify-content: center; width: 48px; }
.search { display: flex; align-items: center; gap: 10px; width: 288px; margin-right: 4px; padding-left: 11px; border: 1px solid #c2c2c2; background: #f2f2f2; }
.search input { flex: 1; min-width: 0; padding: 0; border: 0; background: none; font: 14px/20px "Open Sans", sans-serif; }
.search input::placeholder { color: #333; opacity: 1; }
.app { display: flex; align-items: center; justify-content: center; width: 40px; margin-right: 9px; border-bottom: 3px solid transparent; border-top: 3px solid transparent; }
.task-view { margin-right: 11px; }
.running { border-bottom-color: #76b9ed; }
.progress { background: linear-gradient(90deg, #4a853f 65%, #4e5643 65%); border-top: 0; border-bottom-color: #4cd43c; }
.running.focused { width: 48px; margin-left: -4px; background: #61665a; border-top: 0; }
.tray { display: flex; align-items: center; gap: 10px; margin-left: auto; padding-right: 4px; }
.clock { width: 60px; text-align: center; white-space: nowrap; }
.clock time { display: block; }
.notice { position: relative; display: flex; align-items: center; width: 36px; height: 40px; margin-left: 9px; border-right: 1px solid #7d8275; }
.count {
  position: absolute;
  left: 6px;
  top: 19px;
  width: 17px;
  height: 17px;
  border: 1px solid #aaa;
  border-radius: 50%;
  background: #333a33;
  line-height: 15px;
}
```
